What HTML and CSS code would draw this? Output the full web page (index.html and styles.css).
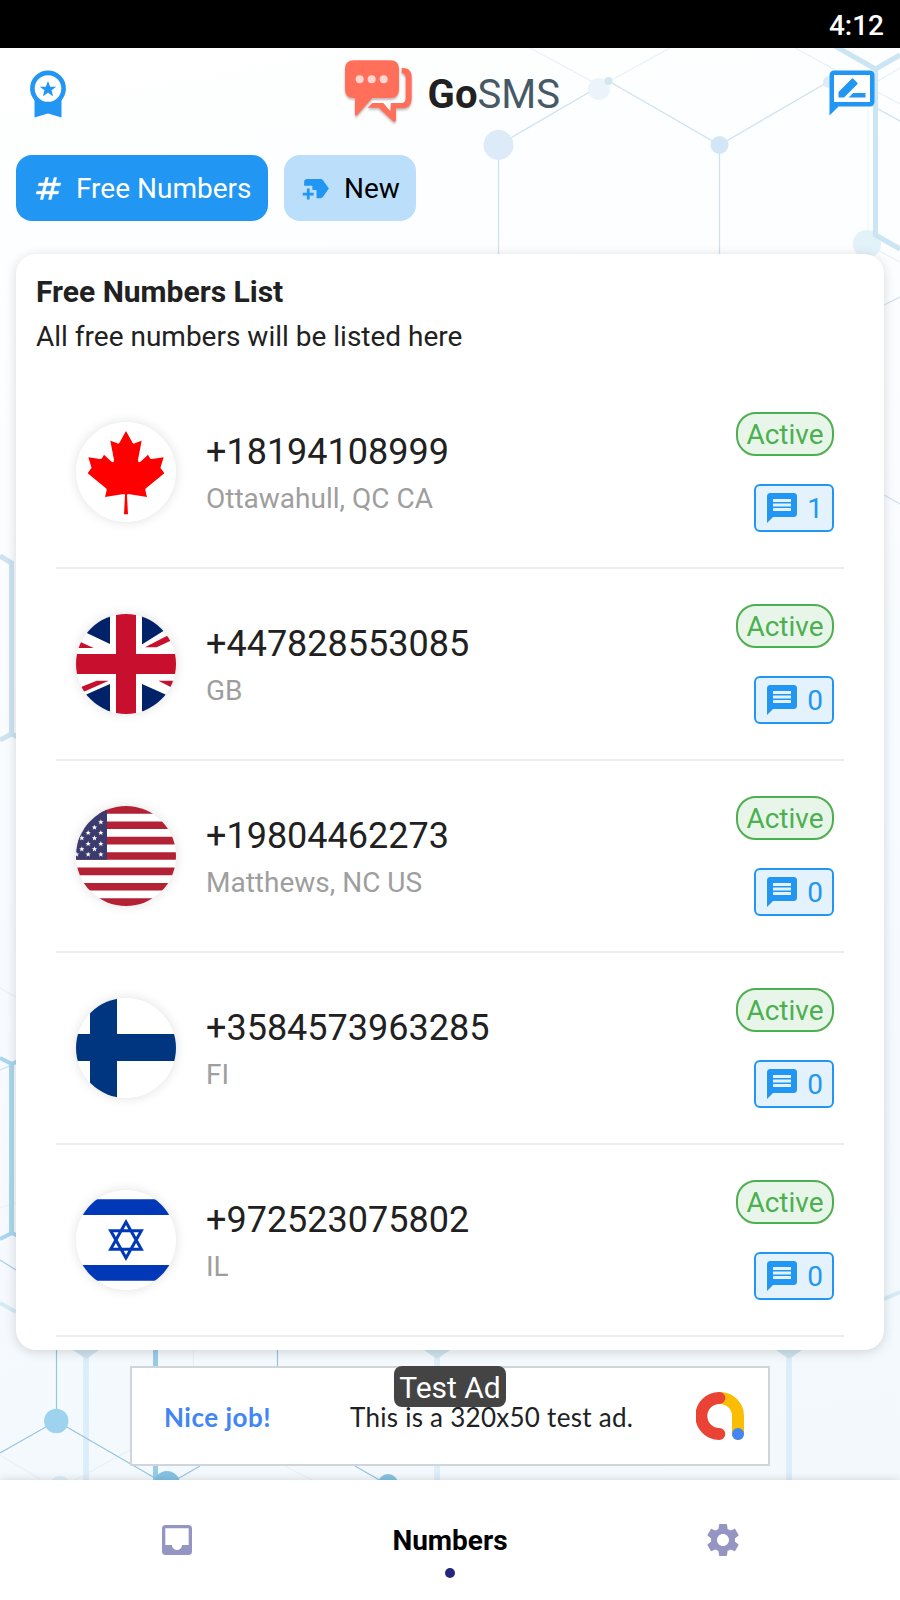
FILE: index.html
```html
<!DOCTYPE html>
<html lang="en">
<head>
<meta charset="utf-8">
<title>GoSMS</title>
<link rel="stylesheet" href="styles.css">
</head>
<body>
<svg class="defs" width="0" height="0">
  <symbol id="chat" viewBox="0 0 24 24"><path d="M20 2H4c-1.1 0-1.99.9-1.99 2L2 22l4-4h14c1.1 0 2-.9 2-2V4c0-1.1-.9-2-2-2zm-2 12H6v-2h12v2zm0-3H6V9h12v2zm0-3H6V6h12v2z"/></symbol>
  <symbol id="star" viewBox="-10 -10 20 20"><path d="M0-9 2.3-3H8.6L3.7.9 5.4 7 0 3.4-5.4 7-3.7.9-8.6-3H-2.3z"/></symbol>
</svg>
<div class="app">
  <svg class="backdrop" viewBox="0 48 900 1432" fill="none">
    <g stroke="#e8f1f7" stroke-width="1.2">
      <path d="M530 48 608 90M670 48 608 82M795 48 828 66 900 104M900 68 876 82M866 244 900 262M0 988 16 997M0 1208 16 1203M0 1455 40 1479M75 1480 130 1450M285 1466 312 1480M193.500 1350V1366"/>
    </g>
    <path d="M868 100V240" stroke="#f1f8f8" stroke-width="1.200"/>
    <g stroke="#d0e2ee" stroke-width="1.3">
      <path d="M498.500 145V254M498.500 145 608.500 81 719.500 145 828 82 900 121M719.500 145V254M884 305 900 297M884 495 900 504M0 1070 12 1065"/>
    </g>
    <g fill="#dcebf7"><circle cx="599" cy="89" r="11" fill="#ebf4fa"/><circle cx="498.500" cy="145" r="15"/><circle cx="608.500" cy="81" r="4" fill="#d3e6f2"/><circle cx="719.500" cy="145" r="9" fill="#d3e6f5"/><circle cx="829" cy="82" r="6"/><circle cx="867" cy="244" r="14" fill="#e3f1f9"/></g>
    <path d="M835 46 875.500 69 900 55M875.500 69V235L900 249" stroke="#cbe5f3" stroke-width="5"/>
    <path d="M0 556 11.500 563V734L0 740M11.500 734 18 737" stroke="#cde3f0" stroke-width="5"/>
    <path d="M0 1058 12 1064 18 1061M0 1239 12 1233 18 1236" stroke="#a9d5ee" stroke-width="4"/>
    <path d="M11.500 1064V1233" stroke="#aad8e8" stroke-width="5"/>
    <path d="M0 1260 16 1270" stroke="#a5d2e8" stroke-width="1.300"/>
    <path d="M0 1303 16 1312M884 1299 900 1292" stroke="#d3ebf5" stroke-width="4"/>
    <g fill="#dceefa"><path d="M83 1350h6v130h-6zM434 1350h6v130h-6zM786 1350h6v130h-6z"/><path d="M70 1348h32l-16 11zM421 1348h32l-16 11zM773 1348h32l-16 11z" fill="#cde3ef"/><circle cx="60" cy="1487" r="11"/></g>
    <path d="M155.500 1350V1480" stroke="#97cce8" stroke-width="5"/>
    <path d="M56.500 1350V1421L0 1453M56.500 1421 167 1485 200 1466M277.500 1350V1366M355 1466 388 1485" stroke="#96c6df" stroke-width="1.200"/>
    <circle cx="56.300" cy="1421" r="12.200" fill="#9dd3ee"/><circle cx="167" cy="1484" r="13" fill="#85c2e2"/><circle cx="388" cy="1484" r="10" fill="#85c2e2"/>
  </svg>

  <div class="statusbar">4:12</div>

  <header class="header">
    <svg class="award" viewBox="0 0 36 48"><path d="M4.500 28h27v19.500l-13.500-4-13.500 4z" fill="#2196f3"/><circle cx="18" cy="18.500" r="15.600" fill="#fff" stroke="#2196f3" stroke-width="4.600"/><use href="#star" x="8.500" y="10" width="19" height="19" fill="#2196f3"/></svg>
    <div class="brand">
      <svg class="logo" viewBox="1020 165 240 225">
        <g fill="#ff6f59">
          <path d="M1205 204h8q20 2 22 24v70q-2 26-24 27h-23v35q-1 8-9 4l-43-41h-33l14-14h33l21 25 2-25h31q13 0 13-15v-60q0-12-12-15z"/>
          <path d="M1061 181h110q26 0 26 26v61q0 26-26 26h-54l-45 51q-7 6-7-3v-48h-4q-26 0-26-26v-61q0-26 26-26z"/>
        </g>
        <g fill="#ffd5d2"><circle cx="1079" cy="238" r="12"/><circle cx="1115" cy="238" r="12"/><circle cx="1151" cy="238" r="12"/></g>
      </svg>
      <span class="brand-name"><b>Go</b>SMS</span>
    </div>
    <svg class="review" viewBox="0 0 24 24"><path fill="#fff" d="M3 3h18v14H3z"/><path fill="#2196f3" d="M20 2H4c-1.100 0-1.990.9-1.990 2L2 22l4-4h14c1.100 0 2-.9 2-2V4c0-1.100-.9-2-2-2zm0 14H4V4h16v12zM10.500 14H18v-2h-5.500zm3.860-5.870c.2-.2.2-.51 0-.71l-1.770-1.770c-.2-.2-.51-.2-.71 0L6 11.530V14h2.470z"/></svg>
  </header>

  <div class="chips">
    <div class="chip chip-on"><svg viewBox="0 0 24 24"><path stroke="#fff" stroke-width=".3" d="M20.500 10l.5-2h-4l1-4h-2l-1 4h-4l1-4h-2l-1 4h-4l-.5 2h4l-1 4h-4l-.5 2h4l-1 4h2l1-4h4l-1 4h2l1-4h4l.5-2h-4l1-4h4zm-7 4h-4l1-4h4l-1 4z"/></svg><span>Free Numbers</span></div>
    <div class="chip chip-new"><svg viewBox="0 0 24 24"><path d="M21 12l-4.370 6.160c-.37.52-.98.84-1.630.84h-3v-6H9v-3H3V7c0-1.100.9-2 2-2h10c.65 0 1.260.31 1.630.84L21 12zm-11 3H7v-3H5v3H2v2h3v3h2v-3h3v-2z"/></svg><span>New</span></div>
  </div>

  <main class="card">
    <h1 class="title">Free Numbers List</h1>
    <p class="subtitle">All free numbers will be listed here</p>
    <div class="list">
      <div class="row">
        <svg class="flag" viewBox="0 0 300 300"><path fill="#f00" d="M150 27 170 63Q174 66 178 63L197 56 186 113Q186 126 195 118L216 98 222 109Q224 112 228 111L263 106 254 135Q253 139 256 141L265 154 211 198Q207 201 208 205L213 225 157 216Q153 216 153 220L156 277H144L147 220Q147 216 143 216L87 225 92 205Q93 201 89 198L35 154 44 141Q47 139 46 135L37 106 72 111Q76 112 78 109L84 98 105 118Q114 126 114 113L103 56 122 63Q126 66 130 63z"/></svg>
        <div class="info"><div class="phone">+18194108999</div><div class="place">Ottawahull, QC CA</div></div>
        <div class="tags"><div class="active">Active</div><div class="count"><svg><use href="#chat"/></svg>1</div></div>
      </div>
      <div class="row">
        <svg class="flag" viewBox="0 0 300 300"><path fill="#012169" d="M0 0H102V90L34 58 0 40zM198 0H300V30L267 48 200 90H198zM102 210 34 240 0 258V300H102zM198 210 267 241 300 258V300H198z"/><path fill="#c8102e" d="M120 0h60v120h120v60H180v120h-60V180H0v-60h120zM12 83 53 102H0V83zM207 100H242L300 73 272 66zM17 218 62 200H98L27 232 0 240zM247 200H300V222H290z"/></svg>
        <div class="info"><div class="phone">+447828553085</div><div class="place">GB</div></div>
        <div class="tags"><div class="active">Active</div><div class="count"><svg><use href="#chat"/></svg>0</div></div>
      </div>
      <div class="row">
        <svg class="flag" viewBox="0 0 300 300"><path stroke="#b22234" stroke-width="23.080" d="M0 11.500H300M0 57.700H300M0 103.800H300M0 150H300M0 196.200H300M0 242.300H300M0 288.500H300"/><path fill="#3c3b6e" d="M0 0H93V161H0z"/>
          <g fill="#fff"><use href="#star" x="65" y="39" width="19" height="19"/><use href="#star" x="46" y="55" width="19" height="19"/><use href="#star" x="65" y="71" width="19" height="19"/><use href="#star" x="27" y="71" width="19" height="19"/><use href="#star" x="8" y="87" width="19" height="19"/><use href="#star" x="46" y="87" width="19" height="19"/><use href="#star" x="65" y="104" width="19" height="19"/><use href="#star" x="27" y="104" width="19" height="19"/><use href="#star" x="8" y="120" width="19" height="19"/><use href="#star" x="46" y="120" width="19" height="19"/><use href="#star" x="65" y="136" width="19" height="19"/><use href="#star" x="27" y="136" width="19" height="19"/><use href="#star" x="-8" y="136" width="19" height="19"/></g></svg>
        <div class="info"><div class="phone">+19804462273</div><div class="place">Matthews, NC US</div></div>
        <div class="tags"><div class="active">Active</div><div class="count"><svg><use href="#chat"/></svg>0</div></div>
      </div>
      <div class="row">
        <svg class="flag" viewBox="0 0 300 300"><path fill="#003580" d="M42 0h81v108h177v81H123v111H42V189H0v-81h42z"/></svg>
        <div class="info"><div class="phone">+3584573963285</div><div class="place">FI</div></div>
        <div class="tags"><div class="active">Active</div><div class="count"><svg><use href="#chat"/></svg>0</div></div>
      </div>
      <div class="row">
        <svg class="flag" viewBox="0 0 300 300"><path fill="#0038b8" d="M0 28h300v47H0zM0 225h300v47H0z"/><path fill="none" stroke="#0038b8" stroke-width="9" d="M150 96 104 177.500H196zM150 204 104 122.500H196z"/></svg>
        <div class="info"><div class="phone">+972523075802</div><div class="place">IL</div></div>
        <div class="tags"><div class="active">Active</div><div class="count"><svg><use href="#chat"/></svg>0</div></div>
      </div>
    </div>
  </main>

  <div class="ad">
    <span class="ad-lead">Nice job!</span>
    <span class="ad-text">This is a 320x50 test ad.</span>
    <svg class="ad-logo" viewBox="738 216 144 144" fill="none" stroke-width="36" stroke-linecap="round"><path stroke="#fbbc04" d="M810 234A54 54 0 0 1 864 288V342"/><path stroke="#ea4335" d="M808 234A54 54 0 0 0 808 342"/><circle cx="864" cy="342" r="18" fill="#4285f4"/></svg>
    <span class="ad-tag">Test Ad</span>
  </div>

  <nav class="nav">
    <div class="nav-item"><svg viewBox="0 0 24 24"><path d="M19 3H4.990c-1.110 0-1.980.89-1.980 2L3 19c0 1.100.88 2 1.990 2H19c1.100 0 2-.9 2-2V5c0-1.110-.9-2-2-2zm0 12h-4c0 1.660-1.350 3-3 3s-3-1.340-3-3H4.990V5H19v10z"/></svg></div>
    <div class="nav-item nav-on"><span>Numbers</span><i class="dot"></i></div>
    <div class="nav-item"><svg viewBox="0 0 24 24"><path d="M19.140 12.940c.04-.3.06-.61.06-.94 0-.32-.02-.64-.07-.94l2.030-1.580c.18-.14.23-.41.12-.61l-1.920-3.320c-.12-.22-.37-.29-.59-.22l-2.390.96c-.5-.38-1.030-.7-1.620-.94l-.36-2.540c-.04-.24-.24-.41-.48-.41h-3.840c-.24 0-.43.17-.47.41l-.36 2.540c-.59.24-1.130.57-1.620.94l-2.390-.96c-.22-.08-.47 0-.59.22L2.740 8.870c-.12.21-.08.47.12.61l2.030 1.580c-.05.3-.09.63-.09.94s.02.64.07.94l-2.030 1.580c-.18.14-.23.41-.12.61l1.920 3.320c.12.22.37.29.59.22l2.390-.96c.5.38 1.030.7 1.620.94l.36 2.540c.05.24.24.41.48.41h3.840c.24 0 .44-.17.47-.41l.36-2.540c.59-.24 1.130-.56 1.620-.94l2.390.96c.22.08.47 0 .59-.22l1.920-3.320c.12-.22.07-.47-.12-.61l-2.010-1.580zM12 15.600c-1.980 0-3.600-1.620-3.600-3.600s1.620-3.600 3.600-3.600 3.600 1.620 3.600 3.600-1.620 3.600-3.600 3.600z"/></svg></div>
  </nav>
</div>
</body>
</html>
```
FILE: styles.css
```css
* { box-sizing: border-box; }
body { margin: 0; font-family: Roboto, "Liberation Sans", sans-serif; color: #212121; }
.defs { position: absolute; }
.app {
  position: relative; z-index: 0; width: 900px; height: 1600px; overflow: hidden;
  display: flex; flex-direction: column;
  background: linear-gradient(170deg, #fff 0%, #fdfeff 15%, #f8fbff 50%, #f2f8fc 100%);
}
.backdrop { position: absolute; z-index: -1; left: 0; top: 48px; width: 900px; height: 1432px; }
.statusbar {
  height: 48px; background: #000; color: #fff; text-align: right;
  padding-right: 16px; font-size: 28px; font-weight: 500; line-height: 51px;
}
.header { height: 107px; display: flex; align-items: flex-start; justify-content: space-between; padding: 0 20.5px 0 30px; }
.award { width: 36px; height: 48px; margin-top: 22px; }
.brand { display: flex; gap: 8px; margin: 7px 0 0 8px; }
.logo { width: 80px; height: 75px; filter: drop-shadow(0 2px 1px #9b8a8799); }
.brand-name { font-size: 40px; line-height: 80px; color: #455a64; }
.brand-name b { color: #212121; }
.review { width: 54px; height: 54px; margin-top: 18px; }
.chips { display: flex; gap: 16px; padding-left: 16px; height: 66px; }
.chip { height: 66px; border-radius: 16px; display: flex; align-items: center; gap: 11px; padding: 0 16px; font-size: 28px; line-height: 66px; }
.chip span { padding-top: 2px; }
.chip svg { width: 33px; height: 33px; fill: currentColor; }
.chip-on { width: 252px; background: #2196f3; color: #fff; }
.chip-new { width: 132px; background: #bbdefb; color: #000; }
.chip-new svg { fill: #2196f3; }
.card {
  margin: 33px 16px 0; height: 1096px; padding: 20px 20px 0; border-radius: 20px;
  background: #fff; box-shadow: 0 2px 12px rgba(0,0,0,.15);
}
.title { margin: 0; font-size: 30px; font-weight: 700; line-height: 36px; }
.subtitle { margin: 9px 0 0; font-size: 28px; line-height: 36px; }
.list { padding: 22px 20px 0; }
.row { height: 192px; border-bottom: 2px solid #eee; padding: 0 10px 0 20px; display: flex; align-items: center; }
.flag { width: 100px; height: 100px; border-radius: 50%; background: #fff; box-shadow: 0 0 12px rgba(0,0,0,.12); overflow: hidden; }
.info { flex: 1; padding-left: 30px; }
.phone { font-size: 36px; line-height: 48px; }
.place { font-size: 28px; line-height: 36px; margin-top: 5px; color: #9e9e9e; }
.tags { display: flex; flex-direction: column; align-items: flex-end; gap: 28px; }
.active {
  width: 98px; height: 44px; border: 2px solid #4caf50; border-radius: 20px; background: #e8f5e9;
  color: #4caf50; font-size: 28px; line-height: 41px; text-align: center;
}
.count {
  width: 80px; height: 48px; border: 2px solid #2196f3; border-radius: 6px; background: #e3f2fd;
  color: #2196f3; font-size: 28px; display: flex; align-items: center; justify-content: space-between; padding: 0 9px 0 8px;
}
.count svg { width: 36px; height: 36px; fill: #2196f3; }
.ad {
  position: relative; margin: 16px 130px 0; width: 640px; height: 100px; border: 2px solid #d0d5dc;
  background: #fff; display: flex; align-items: center; font-family: Lato, Roboto, sans-serif; font-size: 26px;
}
.ad-lead { width: 218px; padding: 2px 0 0 32px; color: #4285f4; font-weight: 700; letter-spacing: .5px; }
.ad-text { flex: 1; padding-top: 2px; white-space: nowrap; color: #202124; letter-spacing: .27px; }
.ad-logo { width: 48px; height: 48px; margin-right: 24px; }
.ad-tag {
  position: absolute; left: 262px; top: -2px; width: 112px; height: 41px; border-radius: 8px;
  background: #444; color: #fff; font-family: Roboto, sans-serif; font-size: 30px; line-height: 43px; text-align: center;
}
.nav { margin-top: 14px; height: 120px; background: #fff; box-shadow: 0 -1px 8px rgba(0,0,0,.12); display: flex; padding: 0 41px 0 41px; }
.nav-item { flex: 1; display: flex; flex-direction: column; align-items: center; padding-top: 40px; }
.nav-item svg { width: 40px; height: 40px; fill: #9595c3; }
.nav-on { font-size: 28px; font-weight: 700; line-height: 42px; color: #000; }
.dot { width: 10px; height: 10px; border-radius: 50%; background: #26267f; margin-top: 6px; }
```
